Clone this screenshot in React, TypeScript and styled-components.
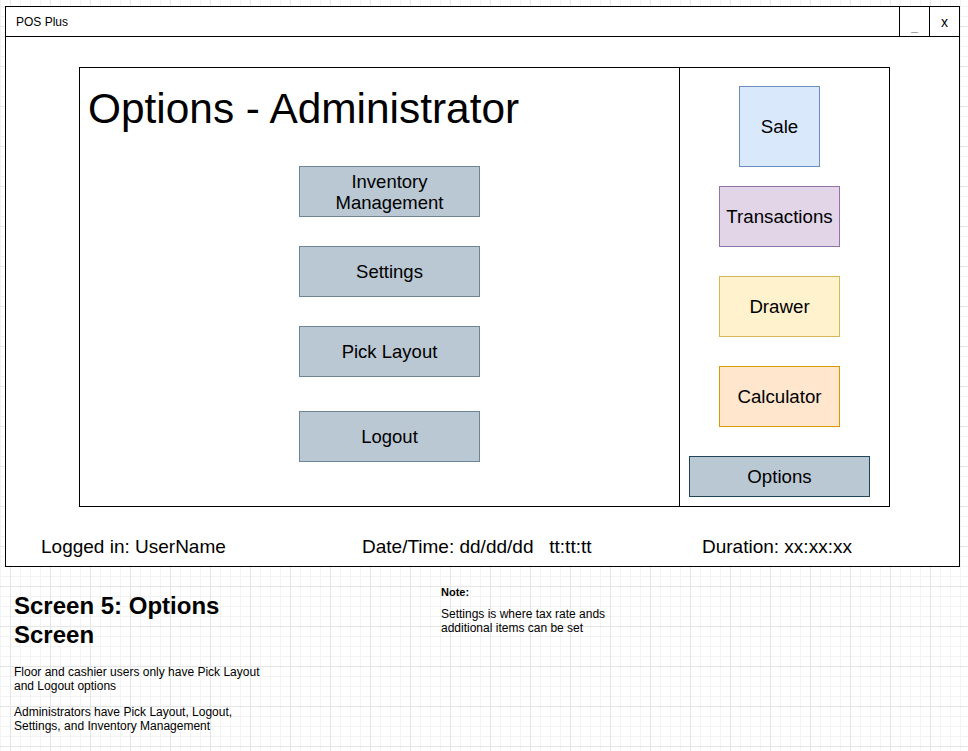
import React from "react";
import styled, { createGlobalStyle } from "styled-components";

const Global = createGlobalStyle`
  html, body {
    margin: 0;
    padding: 0;
    width: 968px;
    height: 751px;
    overflow: hidden;
  }
  body {
    font-family: "Liberation Sans", Arial, Helvetica, sans-serif;
    color: #000;
    background-color: #fff;
    background-image:
      linear-gradient(#e6e6e6 1px, transparent 1px),
      linear-gradient(90deg, #e6e6e6 1px, transparent 1px),
      linear-gradient(#f3f3f3 1px, transparent 1px),
      linear-gradient(90deg, #f3f3f3 1px, transparent 1px);
    background-size: 40px 40px, 40px 40px, 10px 10px, 10px 10px;
    background-position: 10px 26px, 10px 26px, 0 6px, 0 6px;
  }
`;

const Page = styled.div`
  display: flex;
  flex-direction: column;
  padding-top: 6px;
  padding-left: 5px;
`;

const Window = styled.div`
  box-sizing: border-box;
  width: 955px;
  height: 561px;
  border: 1px solid #000;
  background: #fff;
  display: flex;
  flex-direction: column;
`;

const TitleBar = styled.div`
  box-sizing: border-box;
  height: 30px;
  border-bottom: 1px solid #000;
  display: flex;
  align-items: stretch;
`;

const AppName = styled.div`
  flex: 1;
  display: flex;
  align-items: center;
  padding-left: 10px;
  font-size: 12px;
`;

const WinButton = styled.div<{ $muted?: boolean }>`
  width: 30px;
  border-left: 1px solid #000;
  display: flex;
  justify-content: center;
  align-items: ${(p) => (p.$muted ? "flex-end" : "center")};
  padding-bottom: ${(p) => (p.$muted ? "3px" : "0")};
  box-sizing: border-box;
  font-size: ${(p) => (p.$muted ? "12px" : "14px")};
  color: ${(p) => (p.$muted ? "#9a9a9a" : "#000")};
`;

const Body = styled.div`
  padding-top: 30px;
  padding-left: 73px;
  display: flex;
  flex-direction: column;
`;

const Panel = styled.div`
  box-sizing: border-box;
  width: 811px;
  height: 440px;
  border: 1px solid #000;
  display: flex;
`;

const MainPane = styled.div`
  width: 599px;
  display: flex;
  flex-direction: column;
  padding: 17px 0 0 8px;
  box-sizing: border-box;
`;

const Heading = styled.h1`
  margin: 0;
  font-weight: normal;
  font-size: 42.4px;
  line-height: 48px;
  white-space: nowrap;
`;

const MenuList = styled.div`
  display: flex;
  flex-direction: column;
  gap: 29px;
  margin-top: 33px;
  margin-left: 211px;
`;

const MenuButton = styled.div<{ $extra?: number }>`
  box-sizing: border-box;
  width: 181px;
  height: 51px;
  margin-top: ${(p) => p.$extra ?? 0}px;
  background: #bac8d3;
  border: 1px solid #6f8596;
  display: flex;
  align-items: center;
  justify-content: center;
  text-align: center;
  font-size: 18.5px;
  line-height: 21px;
`;

const SidePane = styled.div`
  flex: 1;
  border-left: 1px solid #000;
  display: flex;
  flex-direction: column;
  align-items: center;
  padding: 18px 10px 0 0;
`;

const Tile = styled.div<{ $w: number; $h: number; $bg: string; $bd: string; $mt: number }>`
  box-sizing: border-box;
  width: ${(p) => p.$w}px;
  height: ${(p) => p.$h}px;
  margin-top: ${(p) => p.$mt}px;
  background: ${(p) => p.$bg};
  border: 1px solid ${(p) => p.$bd};
  display: flex;
  align-items: center;
  justify-content: center;
  font-size: 18.7px;
`;

const StatusRow = styled.div`
  display: grid;
  grid-template-columns: 321px 340px 1fr;
  padding-top: 29px;
  padding-left: 35px;
  margin-left: -73px;
  font-size: 19px;
  line-height: 22px;
  white-space: pre;
`;

const Notes = styled.div`
  display: flex;
  padding-top: 18px;
  padding-left: 9px;
`;

const Description = styled.div`
  width: 262px;
  padding-top: 7px;
`;

const ScreenTitle = styled.h2`
  margin: 0;
  font-size: 24px;
  font-weight: bold;
  line-height: 28.5px;
`;

const Para = styled.p<{ $mt: number }>`
  margin: ${(p) => p.$mt}px 0 0 0;
  font-size: 12px;
  line-height: 14px;
`;

const NoteBox = styled.div`
  margin-left: 165px;
  width: 180px;
`;

const NoteLabel = styled.div`
  font-size: 11px;
  font-weight: bold;
  line-height: 14px;
`;

const tiles = [
  { label: "Sale", w: 81, h: 81, bg: "#dae8fc", bd: "#6c8ebf", mt: 0 },
  { label: "Transactions", w: 121, h: 61, bg: "#e1d5e7", bd: "#9673a6", mt: 19 },
  { label: "Drawer", w: 121, h: 61, bg: "#fff2cc", bd: "#d6b656", mt: 29 },
  { label: "Calculator", w: 121, h: 61, bg: "#ffe6cc", bd: "#d79b00", mt: 29 },
  { label: "Options", w: 181, h: 41, bg: "#bac8d3", bd: "#23445d", mt: 29 },
];

export default function App() {
  return (
    <>
      <Global />
      <Page>
        <Window>
          <TitleBar>
            <AppName>POS Plus</AppName>
            <WinButton $muted>_</WinButton>
            <WinButton>x</WinButton>
          </TitleBar>
          <Body>
            <Panel>
              <MainPane>
                <Heading>Options - Administrator</Heading>
                <MenuList>
                  <MenuButton>
                    Inventory
                    <br />
                    Management
                  </MenuButton>
                  <MenuButton>Settings</MenuButton>
                  <MenuButton>Pick Layout</MenuButton>
                  <MenuButton $extra={5}>Logout</MenuButton>
                </MenuList>
              </MainPane>
              <SidePane>
                {tiles.map((t) => (
                  <Tile key={t.label} $w={t.w} $h={t.h} $bg={t.bg} $bd={t.bd} $mt={t.mt}>
                    {t.label}
                  </Tile>
                ))}
              </SidePane>
            </Panel>
            <StatusRow>
              <span>Logged in: UserName</span>
              <span>Date/Time: dd/dd/dd   tt:tt:tt</span>
              <span>Duration: xx:xx:xx</span>
            </StatusRow>
          </Body>
        </Window>
        <Notes>
          <Description>
            <ScreenTitle>
              Screen 5: Options
              <br />
              Screen
            </ScreenTitle>
            <Para $mt={16}>
              Floor and cashier users only have Pick Layout
              <br />
              and Logout options
            </Para>
            <Para $mt={12}>
              Administrators have Pick Layout, Logout,
              <br />
              Settings, and Inventory Management
            </Para>
          </Description>
          <NoteBox>
            <NoteLabel>Note:</NoteLabel>
            <Para $mt={8}>
              Settings is where tax rate ands
              <br />
              additional items can be set
            </Para>
          </NoteBox>
        </Notes>
      </Page>
    </>
  );
}
